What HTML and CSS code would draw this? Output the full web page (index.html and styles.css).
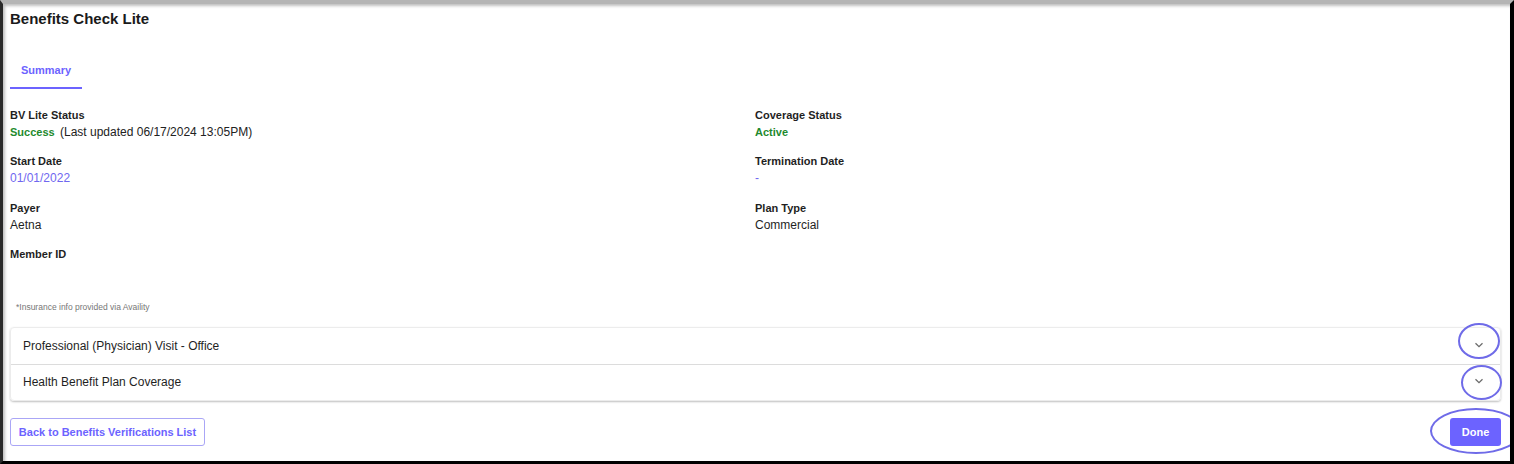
FILE: index.html
```html
<!DOCTYPE html>
<html>
<head>
<meta charset="utf-8">
<link rel="stylesheet" href="styles.css">
</head>
<body>
<div class="frame">
  <h1 class="title">Benefits Check Lite</h1>
  <div class="tabs">
    <div class="tab active">Summary</div>
  </div>
  <div class="fields">
    <div class="field">
      <div class="label">BV Lite Status</div>
      <div class="value"><span class="green">Success</span> <span class="muted">(Last updated 06/17/2024 13:05PM)</span></div>
    </div>
    <div class="field">
      <div class="label">Coverage Status</div>
      <div class="value"><span class="green">Active</span></div>
    </div>
    <div class="field">
      <div class="label">Start Date</div>
      <div class="value link">01/01/2022</div>
    </div>
    <div class="field">
      <div class="label">Termination Date</div>
      <div class="value link">-</div>
    </div>
    <div class="field">
      <div class="label">Payer</div>
      <div class="value">Aetna</div>
    </div>
    <div class="field">
      <div class="label">Plan Type</div>
      <div class="value">Commercial</div>
    </div>
    <div class="field">
      <div class="label">Member ID</div>
      <div class="value"></div>
    </div>
  </div>
  <div class="footnote">*Insurance info provided via Availity</div>
  <div class="accordion">
    <div class="acc-row">
      <span>Professional (Physician) Visit - Office</span>
      <svg class="chev" width="10" height="6" viewBox="0 0 10 6"><path d="M1.5 1.2 L5 4.6 L8.5 1.2" fill="none" stroke="#6b6b6b" stroke-width="1.3"/></svg>
    </div>
    <div class="acc-row">
      <span>Health Benefit Plan Coverage</span>
      <svg class="chev" width="10" height="6" viewBox="0 0 10 6"><path d="M1.5 1.2 L5 4.6 L8.5 1.2" fill="none" stroke="#6b6b6b" stroke-width="1.3"/></svg>
    </div>
  </div>
  <div class="actions">
    <button class="btn btn-outline">Back to Benefits Verifications List</button>
    <button class="btn btn-primary">Done</button>
  </div>
  <div class="mark mark1"></div>
  <div class="mark mark2"></div>
  <div class="mark mark3"></div>
</div>
</body>
</html>
```

FILE: styles.css
```css
* { box-sizing: border-box; }
html, body { margin: 0; padding: 0; background: #fff; }
body {
  font-family: Arial, "Liberation Sans", sans-serif;
  color: #1f1f1f;
  width: 1514px;
  height: 464px;
  overflow: hidden;
}
.frame {
  position: relative;
  width: 1514px;
  height: 464px;
  border-left: 3px solid #2a2a2a;
  border-right: 4px solid #000;
  border-bottom: 3px solid #000;
  border-top: 4px solid #b5b5b5;
  box-shadow: inset 2px 2px 3px rgba(0,0,0,0.25);
  padding: 0 9px 0 7px;
  overflow: hidden;
}
.title {
  margin: 0;
  padding-top: 7px;
  font-size: 15px;
  line-height: 16px;
  font-weight: bold;
  color: #1a1a1a;
}
.tabs {
  display: flex;
  margin-top: 33px;
}
.tab {
  width: 72px;
  height: 29px;
  text-align: center;
  font-size: 11px;
  font-weight: bold;
  line-height: 16px;
  padding-top: 2px;
  color: #6c63ff;
  border-bottom: 2px solid #6c63ff;
}
.fields {
  display: grid;
  grid-template-columns: 745px 1fr;
  grid-auto-rows: 46.4px;
  margin-top: 18px;
}
.field .label {
  font-size: 11px;
  font-weight: bold;
  line-height: 16px;
  color: #1f1f1f;
}
.field .value {
  font-size: 12px;
  line-height: 18px;
  color: #1f1f1f;
}
.green { color: #1e8a2e; font-weight: bold; font-size: 11px; }
.muted { color: #222; margin-left: 2px; }
.value.link { color: #6f67f0; }
.footnote {
  margin-top: 8px;
  padding-left: 6px;
  font-size: 8.5px;
  line-height: 12px;
  color: #777;
}
.accordion {
  margin-top: 14px;
  border: 1px solid #ececec;
  border-radius: 4px;
  box-shadow: 0 1px 2px rgba(0,0,0,0.25);
}
.acc-row {
  height: 36px;
  display: flex;
  align-items: center;
  justify-content: space-between;
  padding: 0 16px 0 12px;
  font-size: 12px;
  color: #1f1f1f;
}
.acc-row + .acc-row { border-top: 1px solid #dcdcdc; }
.chev { display: block; margin-top: -2px; }
.actions {
  display: flex;
  justify-content: space-between;
  margin-top: 17px;
}
.btn {
  font-family: Arial, "Liberation Sans", sans-serif;
  font-size: 11px;
  font-weight: bold;
  height: 28px;
  border-radius: 3px;
  cursor: pointer;
}
.btn-outline {
  width: 195px;
  background: #fff;
  color: #6c63ff;
  border: 1px solid #aaa6f6;
}
.btn-primary {
  width: 51px;
  background: #6c63ff;
  color: #fff;
  border: none;
}
.mark {
  position: absolute;
  border: 2px solid #6f6be8;
  border-radius: 50%;
  pointer-events: none;
}
.mark1 { left: 1455px; top: 319px; width: 42px; height: 36px; }
.mark2 { left: 1458px; top: 361px; width: 41px; height: 35px; }
.mark3 { left: 1427px; top: 404px; width: 92px; height: 46px; }
```
